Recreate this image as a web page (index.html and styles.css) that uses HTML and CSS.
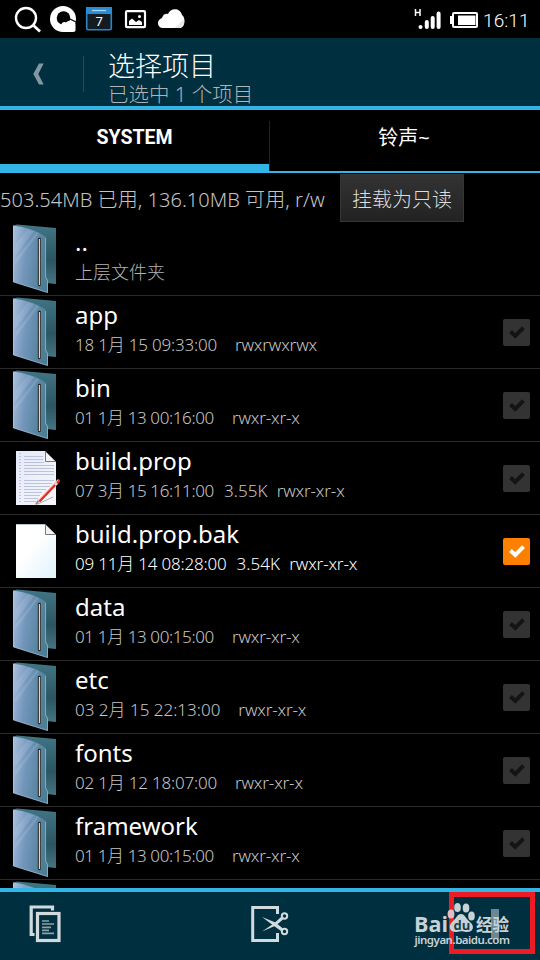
FILE: index.html
```html
<!DOCTYPE html>
<html lang="zh-CN">
<head>
<meta charset="utf-8">
<title>选择项目</title>
<link rel="stylesheet" href="styles.css">
</head>
<body>
<svg class="defs" width="0" height="0" aria-hidden="true">
  <defs>
    <linearGradient id="front" x1="0" y1="0" x2="1" y2=".25"><stop offset="0" stop-color="#a9c0df"/><stop offset=".45" stop-color="#7396bb"/><stop offset="1" stop-color="#4c7e95"/></linearGradient>
    <linearGradient id="back" x1="0" y1="0" x2="0" y2="1"><stop offset="0" stop-color="#417685"/><stop offset=".6" stop-color="#2b5561"/><stop offset="1" stop-color="#447581"/></linearGradient>
    <linearGradient id="paper" x1="0" y1="0" x2="1" y2="1"><stop offset=".4" stop-color="#fff"/><stop offset="1" stop-color="#dff3fc"/></linearGradient>
    <linearGradient id="lined" x1="0" y1="0" x2="1" y2="1"><stop offset="0" stop-color="#e5e9f8"/><stop offset="1" stop-color="#f6f7fd"/></linearGradient>
  </defs>
  <symbol id="folder" viewBox="0 0 60 72">
    <path d="M13 2.5 17 1.5 56 5V61L46 60 40 12Z" fill="url(#back)"/>
    <path d="M13 2.5C25 4 38 8 46 14V54L48 57V70L13 59Z" fill="url(#front)"/>
    <path d="M15 22 28 6 34 8 15 33ZM15 37 37 9 39 10 15 42Z" fill="#cbd9f0" opacity=".18"/>
    <path d="M13.6 3V59L47.5 69.5V57.5L45.6 54V15" fill="none" stroke="#b7cbe5" stroke-width=".8" opacity=".7"/>
    <rect x="37.8" y="14.8" width="3.2" height="48.4" rx="1.4" fill="#202932"/>
    <path d="M39.5 16V62" stroke="#f2d394" stroke-width="1.3"/>
  </symbol>
  <symbol id="blank" viewBox="0 0 60 72">
    <path d="M16 9H45L56 20V63H16Z" fill="url(#paper)"/>
    <path d="M45 9.5V20H56Z" fill="#f2f2f2"/><path d="M45.5 9V19.5H56" fill="none" stroke="#777" stroke-width="1"/><path d="M16 9.5H45" stroke="#bcc5ca"/>
  </symbol>
  <symbol id="text" viewBox="0 0 60 72">
    <path d="M16 9H45L56 20V63H16Z" fill="url(#lined)"/>
    <path d="M24 14.5H43M24 17.5H43M24 20.5H44M24 23.5H54M24 26.5H54M24 29.5H54M24 32.5H54M24 38.5H54M24 41.5H52M24 44.5H50M24 47.5H46M24 50.5H42M24 53.5H40M24 56.5H38M24 59.5H36" stroke="#bcc3dc"/>
    <path d="M20 11V62" stroke="#bcc3dc" stroke-width="2" stroke-dasharray="1 2"/>
    <path d="M45 9.5V20H56Z" fill="#f5f5f5"/><path d="M45.5 9V19.5H56" fill="none" stroke="#777"/>
    <path d="M38 62 53 55" stroke="#aab"/>
    <path d="M36 62.5 39 58" stroke="#888" stroke-width="2"/><path d="M38.8 59.5 59 38" stroke="#f6b9b5" stroke-width="3"/><path d="M39.5 59.5 60 38" stroke="#e5261d" stroke-width="1.9"/><path d="M55 43 57 41" stroke="#ddd" stroke-width="2.5"/>
  </symbol>
  <symbol id="tick" viewBox="0 0 27 27"><path d="M7.5 12.5 12.3 17 20.5 8.7" fill="none" stroke="currentColor" stroke-width="4"/></symbol>
</svg>

<div class="screen">
  <div class="status">
    <svg class="status-left" width="200" height="38" viewBox="0 0 200 38">
      <circle cx="26" cy="18" r="10" fill="none" stroke="#fff" stroke-width="2.4"/><path d="M33 25 40 31.5" stroke="#fff" stroke-width="2.8"/>
      <circle cx="63" cy="19" r="13" fill="#fff"/><circle cx="63.500" cy="18" r="6.8" fill="#000"/><path d="M61 25.5C61 23 64 21 66 22.5 68 20 73 20 74 23L75.5 24V30C75.5 31 75 32 73 32H64C60 31 59 27 61 25.5Z" fill="#fff"/><path d="M70 19 76 22" stroke="#000" stroke-width="1.2"/>
      <rect x="86.700" y="7.700" width="24.600" height="22" rx="1.5" fill="#141c22" stroke="#2a86cc" stroke-width="1.6"/><path d="M86 7H112V14H86Z" fill="#2a8ad4"/><path d="M92 10.500H106" stroke="#a9d5f4" stroke-width="1.3"/><text x="95.500" y="26" class="cal">7</text>
      <rect x="126" y="11.2" width="19" height="16" rx="1" fill="none" stroke="#fff" stroke-width="2.2"/><path d="M129 25V21L132 18.5 136 22 139 20 142 22V25Z" fill="#fff"/><circle cx="139.5" cy="16.5" r="1.5" fill="#fff"/>
      <path d="M163 28C157 28 156 20 162 18 163 14 166 13 168 14 170 8 180 7 182 15 186 17 185 28 180 28Z" fill="#fff"/><path d="M174 28C179 26 180 21 184 20 185 24 183 28 179 28Z" fill="#e8e8e8"/>
    </svg>
    <div class="status-right">
      <svg width="72" height="38" viewBox="410 0 72 38">
        <path d="M415.5 9V16M420 9V16M415.5 12.5H420" stroke="#fff" stroke-width="1.5"/>
        <circle cx="420.5" cy="27" r="2" fill="#fff"/><path d="M426.8 22V27M432.7 18V27M438.6 13.5V27" stroke="#fff" stroke-width="4" stroke-linecap="round"/>
        <rect x="453" y="13" width="24" height="14" rx="1" fill="none" stroke="#fff" stroke-width="2"/><rect x="458" y="15.5" width="17.5" height="9.5" fill="#fff"/><rect x="450" y="16" width="3" height="8" fill="#fff"/>
      </svg>
      <span class="clock">16:11</span>
    </div>
  </div>

  <header class="header">
    <svg class="back" width="84" height="68" viewBox="0 0 84 68"><path d="M39 25.5H43.7L38.3 36 43.7 46.5H39L33.3 36Z" fill="#8198a2"/><path d="M83.5 18V54" stroke="#25495a"/></svg>
    <div class="titles"><h1 class="title">选择项目</h1><div class="subtitle">已选中 1 个项目</div></div>
  </header>

  <nav class="tabs">
    <div class="tab tab-active"><span class="tab-en">SYSTEM</span></div>
    <div class="tab"><span class="tab-cn">铃声~</span></div>
  </nav>

  <div class="mount"><span class="mount-info">503.54MB 已用, 136.10MB 可用, r/w</span><button class="mount-btn">挂载为只读</button></div>

  <main class="list">
    <div class="row"><svg class="icon"><use href="#folder"/></svg><div class="info"><div class="name">..</div><div class="meta up">上层文件夹</div></div></div>
    <div class="row"><svg class="icon"><use href="#folder"/></svg><div class="info"><div class="name">app</div><div class="meta"><span class="date snug">18 1月 15 09:33:00</span><span class="perm wide">rwxrwxrwx</span></div></div><svg class="check"><use href="#tick"/></svg></div>
    <div class="row"><svg class="icon"><use href="#folder"/></svg><div class="info"><div class="name">bin</div><div class="meta"><span class="date tight">01 1月 13 00:16:00</span><span class="perm wide">rwxr-xr-x</span></div></div><svg class="check"><use href="#tick"/></svg></div>
    <div class="row"><svg class="icon"><use href="#text"/></svg><div class="info"><div class="name">build.prop</div><div class="meta"><span class="date tight">07 3月 15 16:11:00</span><span class="size">3.55K</span><span class="perm">rwxr-xr-x</span></div></div><svg class="check"><use href="#tick"/></svg></div>
    <div class="row selected"><svg class="icon"><use href="#blank"/></svg><div class="info"><div class="name">build.prop.bak</div><div class="meta"><span class="date snug">09 11月 14 08:28:00</span><span class="size">3.54K</span><span class="perm">rwxr-xr-x</span></div></div><svg class="check"><use href="#tick"/></svg></div>
    <div class="row"><svg class="icon"><use href="#folder"/></svg><div class="info"><div class="name">data</div><div class="meta"><span class="date tight">01 1月 13 00:15:00</span><span class="perm wide">rwxr-xr-x</span></div></div><svg class="check"><use href="#tick"/></svg></div>
    <div class="row"><svg class="icon"><use href="#folder"/></svg><div class="info"><div class="name">etc</div><div class="meta"><span class="date">03 2月 15 22:13:00</span><span class="perm wide">rwxr-xr-x</span></div></div><svg class="check"><use href="#tick"/></svg></div>
    <div class="row"><svg class="icon"><use href="#folder"/></svg><div class="info"><div class="name">fonts</div><div class="meta"><span class="date snug">02 1月 12 18:07:00</span><span class="perm wide">rwxr-xr-x</span></div></div><svg class="check"><use href="#tick"/></svg></div>
    <div class="row"><svg class="icon"><use href="#folder"/></svg><div class="info"><div class="name">framework</div><div class="meta"><span class="date tight">01 1月 13 00:15:00</span><span class="perm wide">rwxr-xr-x</span></div></div><svg class="check"><use href="#tick"/></svg></div>
    <div class="row"><svg class="icon"><use href="#folder"/></svg></div>
  </main>

  <footer class="toolbar">
    <svg width="40" height="44" viewBox="26 900 40 44">
      <path d="M34.500 934.500H31.200V907H52.500V910.500" fill="none" stroke="#d1dadd" stroke-width="3.2"/>
      <rect x="37.500" y="913.500" width="21.500" height="27" fill="none" stroke="#d1dadd" stroke-width="3.2"/>
      <path d="M42 921H49M42 924H54M42 927.300H51M42 930.300H49M42 933.300H54" stroke="#8ca2aa" stroke-width="1.7"/>
    </svg>
    <svg width="44" height="44" viewBox="248 900 44 44">
      <path d="M277.500 914V907.500H252.700V940.500H277.500V933" fill="none" stroke="#d1dadd" stroke-width="3"/>
      <path d="M262 917 275.500 922.500 283 928.500 281 931 274 926ZM262 931.500 274.500 923 281 917 283 919.500 276 925.500Z" fill="#d1dadd"/>
      <circle cx="284.500" cy="916" r="2.700" fill="none" stroke="#d1dadd" stroke-width="2"/><circle cx="284.500" cy="931.500" r="2.700" fill="none" stroke="#d1dadd" stroke-width="2"/>
    </svg>
    <svg width="130" height="64" viewBox="410 892 130 64">
      <rect x="491" y="909" width="8" height="30" fill="#6c8791"/>
      <rect x="451.500" y="894.500" width="81" height="57" fill="none" stroke="#ed1c24" stroke-width="5"/>
      <g fill="#c8d2d6">
        <text x="414" y="931.500" class="wm-logo" textLength="34" lengthAdjust="spacingAndGlyphs">Bai</text>
        <ellipse cx="451" cy="914" rx="3.400" ry="4.500" fill="#e3bcc1"/><ellipse cx="457.500" cy="907.500" rx="3.300" ry="4.600"/><ellipse cx="466" cy="908" rx="3.300" ry="4.600"/><ellipse cx="471.500" cy="916" rx="3.300" ry="4.500"/>
        <path d="M461 914C465 914 466 919 470 922 476 927 472 933 466 932 462 931 460 931 457 932 451 933 447 927 452 922 456 919 457 914 461 914Z"/>
        <text x="453.500" y="930" class="wm-du">du</text>
        <text x="476" y="931" class="wm-cn" textLength="33">经验</text>
        <text x="414.500" y="944" class="wm-url" textLength="95.500">jingyan.baidu.com</text>
      </g>
    </svg>
  </footer>
</div>
</body>
</html>
```

FILE: styles.css
```css
* { box-sizing: border-box; }
body { margin: 0; background: #000; font-family: "Noto Sans", "Noto Sans CJK SC", sans-serif; font-weight: 300; }
.defs { display: block; width: 0; height: 0; position: absolute; }
.screen { width: 540px; height: 960px; overflow: hidden; display: flex; flex-direction: column; color: #fff; }

.status { height: 38px; flex: none; display: flex; justify-content: space-between; }
.status-left { display: block; }
.status-right { width: 130px; display: flex; }
.clock { font: 300 19px/38px Roboto, sans-serif; letter-spacing: .1px; margin-top: 2px; margin-left: 1px; white-space: nowrap; }
.cal { font: 13px "Noto Sans", sans-serif; fill: #fff; }

.header { height: 72px; flex: none; display: flex; background: #002f3f; border-bottom: 4px solid #33b5e5; }
.back { flex: none; }
.titles { padding: 11px 0 0 24px; }
.title { margin: 0; font-size: 27px; line-height: 34px; font-weight: 300; white-space: nowrap; }
.subtitle { font-size: 20.5px; line-height: 23px; color: #b3b3b3; white-space: nowrap; }

.tabs { height: 63px; flex: none; display: grid; grid-template-columns: 269px 271px; grid-template-rows: 63px; }
.tab { display: flex; align-items: flex-start; justify-content: center; border-bottom: 2px solid #33b5e5; }
.tab-active { border-bottom-width: 9px; }
.tab-en { font: 700 19.5px/56px Roboto, sans-serif; }
.tab-cn { width: 100%; height: 50px; margin-top: 11px; padding: 1px 2px 0 0; border-left: 1px solid #222; text-align: center; font-size: 20px; line-height: 32px; font-weight: 400; }

.mount { height: 50px; flex: none; display: flex; }
.mount-info { width: 340px; flex: none; font-size: 20px; line-height: 54px; letter-spacing: .04px; color: #c4c4c4; white-space: nowrap; }
.mount-btn { width: 124px; height: 48px; margin: 1px 0 0; padding: 0; border: 1px solid #353535; background: linear-gradient(#333, #222); color: #ddd; font: inherit; font-size: 20px; white-space: nowrap; }

.list { flex: 1; min-height: 0; overflow: hidden; }
.row { height: 73px; display: flex; border-bottom: 1px solid #2b2b2b; }
.icon { width: 60px; height: 72px; flex: none; }
.info { flex: 1; padding: 1px 0 0 15px; }
.name { font-size: 24px; line-height: 36px; font-weight: 400; white-space: nowrap; }
.meta { display: flex; margin-top: 1px; font-size: 17px; line-height: 22px; color: #c6c6c6; white-space: nowrap; }
.up { font-size: 18px; color: #b3b3b3; }
.snug { letter-spacing: -.2px; }
.tight { letter-spacing: -.38px; }
.size { margin-left: 10px; letter-spacing: .1px; }
.perm { margin-left: 9px; letter-spacing: -.15px; }
.wide { margin-left: 18px; }
.selected .meta { color: #fff; }
.check { width: 27px; height: 27px; flex: none; margin: 23px 10px 0 0; border-radius: 2px; background: #333; color: #141414; }
.selected .check { background: #ff8000; color: #fff; }

.toolbar { height: 72px; flex: none; background: #002f3f; border-top: 4px solid #33b5e5; display: flex; justify-content: space-between; padding-left: 26px; }
.toolbar svg { display: block; }
.toolbar svg:not(:last-child) { margin-top: 8px; }
.toolbar svg:nth-child(2) { margin-left: 64px; }
.wm-logo { font: 700 22px "Open Sans", sans-serif; }
.wm-du { font: 700 13px "Open Sans", sans-serif; fill: #173e4d; }
.wm-cn { font: 700 16.5px "Noto Sans CJK SC", sans-serif; }
.wm-url { font: 600 11.5px "Noto Sans", sans-serif; }
```
